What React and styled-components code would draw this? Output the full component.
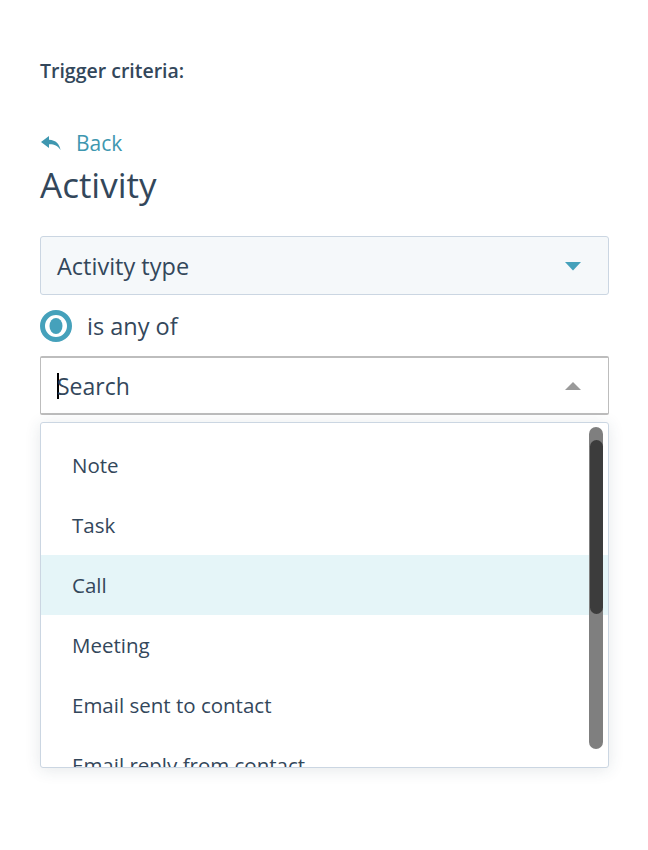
import React from "react";
import styled, { createGlobalStyle } from "styled-components";

const GlobalStyle = createGlobalStyle`
  html, body {
    margin: 0;
    padding: 0;
    background: #fff;
  }
  body {
    font-family: "Open Sans", "Noto Sans", sans-serif;
    color: #33475b;
  }
`;

const Page = styled.div`
  width: 648px;
  height: 850px;
  box-sizing: border-box;
  padding: 58px 39px 0 40px;
  display: flex;
  flex-direction: column;
`;

const Heading = styled.div`
  font-size: 19.5px;
  font-weight: 600;
  line-height: 26px;
  color: #33475b;
`;

const BackLink = styled.a`
  margin-top: 45px;
  display: flex;
  align-items: center;
  gap: 14px;
  color: #3e97b0;
  font-size: 21px;
  line-height: 28px;
  text-decoration: none;
  cursor: pointer;
`;

const Title = styled.h1`
  margin: 0;
  font-size: 35px;
  font-weight: 400;
  line-height: 56px;
  color: #33475b;
`;

const SelectBox = styled.div`
  margin-top: 23px;
  height: 59px;
  box-sizing: border-box;
  display: flex;
  align-items: center;
  justify-content: space-between;
  padding: 0 26px 0 16px;
  background: ${(p) => (p.$filled ? "#f5f8fa" : "#fff")};
  border: 1px solid ${(p) => (p.$filled ? "#cbd6e2" : "#b8b8b8")};
  border-radius: 3px;
  font-size: 23.5px;
  color: #33475b;
`;

const SearchBox = styled(SelectBox)`
  margin-top: 14px;
  border-radius: 2px;
  border-color: #bdbdbd;
  border-width: 2px 1px 2px 1px;
  font-size: 23px;
`;

const SearchText = styled.div`
  display: flex;
  align-items: center;
`;

const Cursor = styled.span`
  display: inline-block;
  width: 2px;
  height: 26px;
  background: #000;
  margin-right: -2px;
`;

const RadioRow = styled.div`
  margin-top: 15px;
  display: flex;
  align-items: center;
  gap: 15px;
  font-size: 23.5px;
  line-height: 32px;
`;

const Dropdown = styled.div`
  position: relative;
  margin-top: 7px;
  height: 346px;
  box-sizing: border-box;
  border: 1px solid #cbd6e2;
  border-radius: 3px;
  box-shadow: 0 2px 16px rgba(45, 62, 80, 0.12);
  overflow: hidden;
  background: #fff;
`;

const List = styled.ul`
  list-style: none;
  margin: 0;
  padding: 12px 0 0;
`;

const Item = styled.li`
  height: 60px;
  display: flex;
  align-items: center;
  padding-left: 31px;
  font-size: 20.5px;
  color: #33475b;
  background: ${(p) => (p.$active ? "#e5f5f8" : "transparent")};
`;

const Track = styled.div`
  position: absolute;
  top: 4px;
  right: 5px;
  width: 14px;
  height: 322px;
  border-radius: 7px;
  background: #7f7f7f;
`;

const Thumb = styled.div`
  position: absolute;
  top: 13px;
  left: 1px;
  width: 13px;
  height: 174px;
  border-radius: 7px;
  background: #3c3c3c;
`;

const BackIcon = () => (
  <svg width="22" height="16" viewBox="0 0 22 16">
    <path
      d="M9 1 L1 7 L9 13 L9 9.2 C14 9 17.5 10.5 20.5 15 C19.5 9 16 5.3 9 4.8 Z"
      fill="#3e97b0"
    />
  </svg>
);

const Caret = ({ up, color }) => (
  <svg width="18" height="10" viewBox="0 0 18 10">
    {up ? (
      <path d="M9 1 L17 9 L1 9 Z" fill={color} />
    ) : (
      <path d="M1 1 L17 1 L9 9.5 Z" fill={color} />
    )}
  </svg>
);

const Radio = () => (
  <svg width="32" height="32" viewBox="0 0 32 32">
    <circle cx="16" cy="16" r="13.5" fill="none" stroke="#45a1bb" strokeWidth="5" />
    <ellipse cx="16" cy="16" rx="6.5" ry="8" fill="#45a1bb" />
  </svg>
);

const items = [
  "Note",
  "Task",
  "Call",
  "Meeting",
  "Email sent to contact",
  "Email reply from contact",
];

export default function App() {
  return (
    <>
      <GlobalStyle />
      <Page>
        <Heading>Trigger criteria:</Heading>
        <BackLink>
          <BackIcon />
          Back
        </BackLink>
        <Title>Activity</Title>
        <SelectBox $filled>
          <span>Activity type</span>
          <Caret color="#45a1bb" />
        </SelectBox>
        <RadioRow>
          <Radio />
          <span>is any of</span>
        </RadioRow>
        <SearchBox>
          <SearchText>
            <Cursor />
            <span>Search</span>
          </SearchText>
          <Caret up color="#9a9a9a" />
        </SearchBox>
        <Dropdown>
          <List>
            {items.map((it) => (
              <Item key={it} $active={it === "Call"}>
                {it}
              </Item>
            ))}
          </List>
          <Track>
            <Thumb />
          </Track>
        </Dropdown>
      </Page>
    </>
  );
}
